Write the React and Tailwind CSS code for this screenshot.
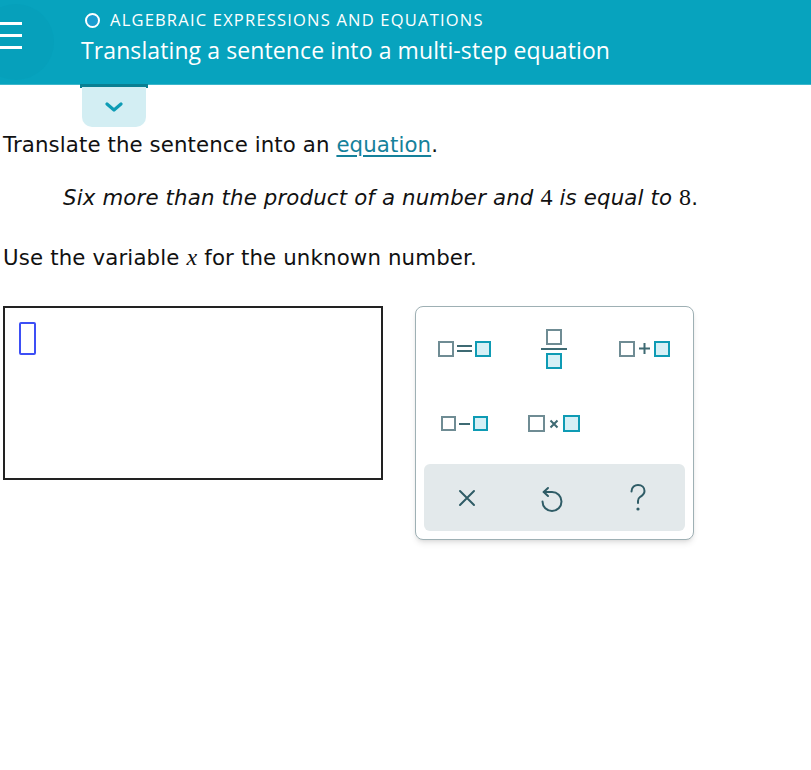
import React from "react";

const GrayBox = ({ size = 16 }) => (
  <span
    className="inline-block border-2 border-[#6f8c94] bg-white"
    style={{ width: size, height: size }}
  />
);

const BlueBox = ({ size = 16 }) => (
  <span
    className="inline-block border-2 border-[#0e9bb4] bg-[#d6f0f6]"
    style={{ width: size, height: size }}
  />
);

const KeyButton = ({ children }) => (
  <button className="flex items-center justify-center h-[75px] w-[90px]">
    {children}
  </button>
);

const App = () => {
  return (
    <div className="relative w-[811px] h-[770px] bg-white overflow-hidden">
      {/* header */}
      <header className="relative h-[85px] bg-[#07a3be] border-b border-[#3cb6cb] overflow-hidden">
        <div className="absolute -left-[22px] top-[4px] w-[76px] h-[76px] rounded-full bg-[#06a0bb]" />
        <div className="absolute left-0 top-[22px] flex flex-col gap-[9px]">
          <span className="block w-[22px] h-[3px] bg-white" />
          <span className="block w-[22px] h-[3px] bg-white" />
          <span className="block w-[22px] h-[3px] bg-white" />
        </div>
        <div className="pl-[81px] pt-[9px] font-['Open_Sans'] text-white">
          <div className="flex items-center h-[22px]">
            <span className="ml-[4px] w-[15px] h-[15px] rounded-full border-2 border-white bg-[#1a9dd0]" />
            <span className="ml-[10px] text-[16.5px] tracking-[1.2px] leading-none">
              ALGEBRAIC EXPRESSIONS AND EQUATIONS
            </span>
          </div>
          <div className="mt-[4px] text-[23px] tracking-[0.1px] leading-[30px]">
            Translating a sentence into a multi-step equation
          </div>
        </div>
      </header>

      {/* dropdown tab */}
      <div className="absolute left-[80px] top-[84px] w-[68px] h-[4px] bg-[#0a7f92]" />
      <button className="absolute left-[82px] top-[87px] w-[64px] h-[40px] rounded-b-[10px] bg-[#d3eef3] flex items-center justify-center">
        <svg width="18" height="12" viewBox="0 0 18 12">
          <path d="M2 3 L9 9 L16 3" fill="none" stroke="#0e9cb5" strokeWidth="3.2" strokeLinecap="round" strokeLinejoin="round" />
        </svg>
      </button>

      {/* content */}
      <main className="pt-[46px] font-['DejaVu_Sans'] text-[21.3px] text-[#111]">
        <p className="pl-[3px] leading-[28px] tracking-[0.1px]">
          Translate the sentence into an{" "}
          <span className="text-[#15819b] underline underline-offset-[3px]">equation</span>.
        </p>
        <p className="pl-[63px] mt-[24px] leading-[28px] italic tracking-[0.15px]">
          Six more than the product of a number and{" "}
          <span className="not-italic font-['Liberation_Serif'] text-[24px]">4</span> is equal to{" "}
          <span className="not-italic font-['Liberation_Serif'] text-[24px]">8</span>
          <span className="not-italic">.</span>
        </p>
        <p className="pl-[3px] mt-[31px] leading-[28px] tracking-[0.15px]">
          Use the variable{" "}
          <span className="italic font-['Liberation_Serif'] text-[24px]">x</span> for the unknown number.
        </p>

        <div className="flex items-start mt-[34px]">
          {/* answer box */}
          <div className="ml-[3px] w-[380px] h-[174px] border-2 border-[#222] pl-[14px] pt-[14px]">
            <span className="block w-[17px] h-[33px] border-2 border-[#3d4ff5] rounded-[2px]" />
          </div>

          {/* keypad */}
          <div className="ml-[32px] w-[279px] h-[234px] rounded-[8px] border-[1.5px] border-[#9eb0b4] bg-white shadow-md flex flex-col">
            <div className="pl-[3px] pt-[4px] grid grid-cols-[90px_90px_90px]">
              <KeyButton>
                <GrayBox />
                <span className="mx-[3px] flex flex-col gap-[3px]">
                  <span className="block w-[15px] h-[2px] bg-[#3e6a73]" />
                  <span className="block w-[15px] h-[2px] bg-[#3e6a73]" />
                </span>
                <BlueBox />
              </KeyButton>
              <KeyButton>
                <span className="flex flex-col items-center">
                  <GrayBox />
                  <span className="block w-[26px] h-[2px] my-[3px] bg-[#3e6a73]" />
                  <BlueBox />
                </span>
              </KeyButton>
              <KeyButton>
                <GrayBox />
                <svg width="13" height="13" viewBox="0 0 13 13" className="mx-[3px]">
                  <path d="M6.5 1 V12 M1 6.5 H12" stroke="#3e6a73" strokeWidth="2" />
                </svg>
                <BlueBox />
              </KeyButton>
              <KeyButton>
                <GrayBox size={15} />
                <span className="block mx-[3px] w-[11px] h-[2px] bg-[#3e6a73]" />
                <BlueBox size={15} />
              </KeyButton>
              <KeyButton>
                <GrayBox size={17} />
                <svg width="10" height="10" viewBox="0 0 10 10" className="mx-[4px]">
                  <path d="M1.5 1.5 L8.5 8.5 M8.5 1.5 L1.5 8.5" stroke="#3e6a73" strokeWidth="2" />
                </svg>
                <BlueBox size={17} />
              </KeyButton>
            </div>

            <div className="mt-auto mx-[8px] mb-[8px] h-[67px] rounded-[6px] bg-[#e3e9eb] grid grid-cols-3 items-center pr-[4px]">
              <div className="flex justify-center">
                <svg width="20" height="20" viewBox="0 0 20 20">
                  <path d="M3 3 L17 17 M17 3 L3 17" stroke="#2f5c66" strokeWidth="2" strokeLinecap="round" />
                </svg>
              </div>
              <div className="flex justify-center">
                <svg width="40" height="40" viewBox="0 0 40 40">
                  <path d="M11.7 14 H20 A9.5 9.5 0 1 1 10.5 23.5" fill="none" stroke="#2f5c66" strokeWidth="2" strokeLinecap="round" />
                  <path d="M16 10 L11.7 14 L16 18" fill="none" stroke="#2f5c66" strokeWidth="2" strokeLinecap="round" strokeLinejoin="round" />
                </svg>
              </div>
              <div className="flex justify-center">
                <svg width="20" height="30" viewBox="0 0 20 30">
                  <path d="M3.5 8.5 C3.5 4 7 2 10 2 C14 2 16.5 4.6 16.5 8 C16.5 11.5 14 12.8 12 14 C10.5 15 10 16 10 18 V20" fill="none" stroke="#2f5c66" strokeWidth="2" strokeLinecap="round" />
                  <circle cx="10" cy="26" r="1.6" fill="#2f5c66" />
                </svg>
              </div>
            </div>
          </div>
        </div>
      </main>
    </div>
  );
};

export default App;
